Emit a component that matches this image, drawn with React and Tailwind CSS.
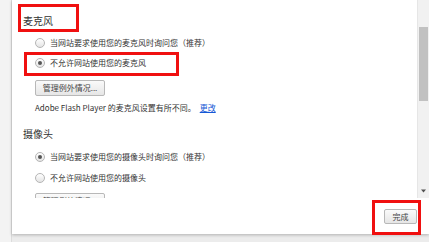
import React from "react";

const FONT = { fontFamily: '"Noto Sans CJK SC", "Liberation Sans", sans-serif' };

function Radio({ checked, label }) {
  return (
    <div className="flex h-[12px] items-center">
      <span className="flex h-[10px] w-[10px] items-center justify-center rounded-full border border-[#b5b5b5] bg-gradient-to-b from-[#ffffff] to-[#e4e4e4]">
        {checked && <span className="h-[4px] w-[4px] rounded-full bg-[#555]" />}
      </span>
      <span className="ml-[5px] text-[8px] leading-[12px] text-[#333]">{label}</span>
    </div>
  );
}

function Btn({ children, className = "" }) {
  return (
    <div
      className={`flex items-center justify-center rounded-[2px] border border-[#b8b8b8] bg-gradient-to-b from-[#fafafa] to-[#e6e6e6] text-[8px] leading-[10px] text-[#444] ${className}`}
    >
      {children}
    </div>
  );
}

export default function App() {
  return (
    <div className="relative flex h-[242px] w-[429px] overflow-hidden bg-[#ececec]" style={FONT}>
      <div className="w-[12px] shrink-0 border-r border-[#dcdcdc] bg-[#f3f3f3]" />
      <div className="flex h-[234px] flex-1 flex-col bg-white shadow-[0_1px_3px_rgba(0,0,0,0.25)]">
        <div className="flex h-[198px]">
          <div className="flex flex-1 flex-col overflow-hidden pl-[11px]">
            <div className="mt-[15px] h-[12px] text-[10px] leading-[12px] text-[#333]">麦克风</div>
            <div className="ml-[12px] flex flex-col">
              <div className="mt-[10px]">
                <Radio label="当网站要求使用您的麦克风时询问您（推荐）" />
              </div>
              <div className="mt-[8px]">
                <Radio checked label="不允许网站使用您的麦克风" />
              </div>
              <Btn className="mt-[11px] h-[16px] w-[70px]">管理例外情况...</Btn>
              <div className="mt-[6px] h-[12px] text-[8px] leading-[12px] text-[#333]">
                Adobe Flash Player 的麦克风设置有所不同。
                <span className="ml-[4px] text-[#1558d6] underline">更改</span>
              </div>
            </div>
            <div className="mt-[14px] h-[12px] text-[10px] leading-[12px] text-[#333]">摄像头</div>
            <div className="ml-[12px] flex flex-col">
              <div className="mt-[11px]">
                <Radio checked label="当网站要求使用您的摄像头时询问您（推荐）" />
              </div>
              <div className="mt-[9px]">
                <Radio label="不允许网站使用您的摄像头" />
              </div>
              <Btn className="mt-[9px] h-[16px] w-[70px] shrink-0">管理例外情况...</Btn>
            </div>
          </div>
          <div className="flex w-[12px] flex-col border-l border-[#e6e6e6] bg-[#f1f1f1] pl-[1px]">
            <div className="mt-[27px] h-[74px] w-[9px] bg-[#c1c1c1]" />
            <div className="flex-1" />
            <svg width="9" height="6" viewBox="0 0 9 6" className="mb-[4px]">
              <path d="M2 1.5 L7 1.5 L4.5 4.5 Z" fill="#505050" />
            </svg>
          </div>
        </div>
        <div className="flex flex-1 items-start justify-end pr-[12px] pt-[11px]">
          <Btn className="h-[15px] w-[33px] border-[#a9a9a9] text-[8.5px]">完成</Btn>
        </div>
      </div>

      <div className="absolute left-[18px] top-[4px] h-[28px] w-[61px] border-[3px] border-[#f01010]" />
      <div className="absolute left-[24px] top-[52px] h-[24px] w-[155px] border-[3px] border-[#f01010]" />
      <div className="absolute left-[372px] top-[200px] h-[35px] w-[49px] border-[3px] border-[#f01010]" />
    </div>
  );
}
